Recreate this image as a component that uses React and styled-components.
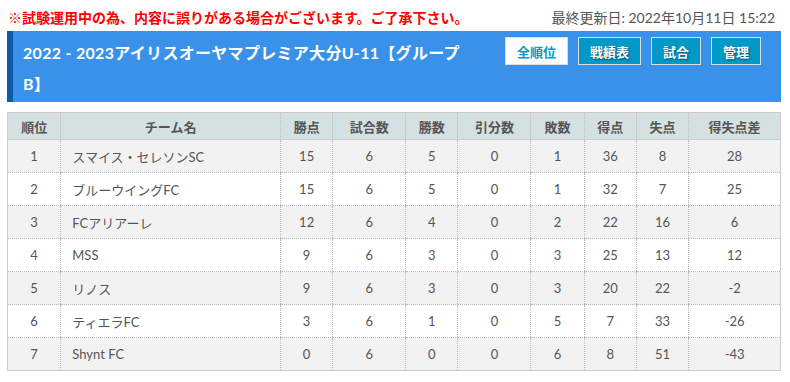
import styled, { createGlobalStyle } from 'styled-components';

const GlobalStyle = createGlobalStyle`
   body {
      margin: 0;
      background: #fff;
      font-family: Lato, "Noto Sans CJK JP", sans-serif;
   }
`;

const Page = styled.div`
   padding: 7px 9px 0 7px;
`;

const TopLine = styled.div`
   display: flex;
   justify-content: space-between;
   align-items: center;
   height: 20px;
   padding-left: 1px;
   padding-right: 6px;
`;

const Notice = styled.span`
   color: #f00;
   font-weight: 700;
   font-size: 14px;
`;

const Updated = styled.span`
   color: #555;
   font-size: 14px;
`;

const Header = styled.div`
   margin-top: 4px;
   display: flex;
   align-items: flex-start;
   background: #3a91ea;
   border-left: 6px solid #0e5ba8;
   height: 71px;
   box-sizing: border-box;
   padding: 6px 20px 0 10px;
`;

const Title = styled.h2`
   margin: 0;
   width: 445px;
   color: #fff;
   font-size: 16px;
   letter-spacing: 0.3px;
   font-weight: 700;
   line-height: 31px;
`;

const Buttons = styled.div`
   margin-left: auto;
   display: flex;
   gap: 10px;
`;

const Btn = styled.button`
   height: 28px;
   padding: 0 11px;
   border: 1px solid #ddd;
   background: ${(p) => (p.active ? '#fff' : '#0099c8')};
   color: ${(p) => (p.active ? '#0099c8' : '#fff')};
   text-shadow: ${(p) => (p.active ? 'none' : '1px 1px 2px rgba(0,0,0,0.5)')};
   font-family: Lato, "Noto Sans CJK JP", sans-serif;
   font-weight: 700;
   font-size: 13px;
   cursor: pointer;
`;

const Table = styled.table`
   margin-top: 10px;
   width: 774px;
   border-collapse: collapse;
   border: 1px solid #ccc;
   font-size: 13px;
   color: #555;
`;

const Th = styled.th`
   height: 26px;
   padding: 0;
   background: #d5e1e1;
   font-weight: 700;
   border-left: 1px dotted #bbb;
   border-bottom: 1px solid #c4cfcf;
   width: ${(p) => p.w}px;
`;

const Row = styled.tr`
   background: ${(p) => (p.odd ? '#f2f2f2' : '#fff')};
`;

const Td = styled.td`
   height: 32px;
   padding: 0;
   text-align: ${(p) => (p.left ? 'left' : 'center')};
   padding-left: ${(p) => (p.left ? '11px' : '0')};
   border-left: 1px dotted #bbb;
   border-bottom: 1px dotted #bbb;
`;

const columns = [
   ['順位', 53],
   ['チーム名', 222],
   ['勝点', 52],
   ['試合数', 73],
   ['勝数', 52],
   ['引分数', 73],
   ['敗数', 53],
   ['得点', 52],
   ['失点', 52],
   ['得失点差', 92],
];

const rows = [
   [1, 'スマイス・セレソンSC', 15, 6, 5, 0, 1, 36, 8, 28],
   [2, 'ブルーウイングFC', 15, 6, 5, 0, 1, 32, 7, 25],
   [3, 'FCアリアーレ', 12, 6, 4, 0, 2, 22, 16, 6],
   [4, 'MSS', 9, 6, 3, 0, 3, 25, 13, 12],
   [5, 'リノス', 9, 6, 3, 0, 3, 20, 22, -2],
   [6, 'ティエラFC', 3, 6, 1, 0, 5, 7, 33, -26],
   [7, 'Shynt FC', 0, 6, 0, 0, 6, 8, 51, -43],
];

const App = () => {
   return (
      <Page>
         <GlobalStyle />
         <TopLine>
            <Notice>※試験運用中の為、内容に誤りがある場合がございます。ご了承下さい。</Notice>
            <Updated>最終更新日: 2022年10月11日 15:22</Updated>
         </TopLine>
         <Header>
            <Title>2022 - 2023アイリスオーヤマプレミア大分U-11【グループB】</Title>
            <Buttons>
               <Btn active>全順位</Btn>
               <Btn>戦績表</Btn>
               <Btn>試合</Btn>
               <Btn>管理</Btn>
            </Buttons>
         </Header>
         <Table>
            <thead>
               <tr>
                  {columns.map(([name, w]) => (
                     <Th key={name} w={w}>
                        {name}
                     </Th>
                  ))}
               </tr>
            </thead>
            <tbody>
               {rows.map((r, i) => (
                  <Row key={r[0]} odd={i % 2 === 0}>
                     {r.map((v, j) => (
                        <Td key={j} left={j === 1}>
                           {v}
                        </Td>
                     ))}
                  </Row>
               ))}
            </tbody>
         </Table>
      </Page>
   );
};

export default App;
